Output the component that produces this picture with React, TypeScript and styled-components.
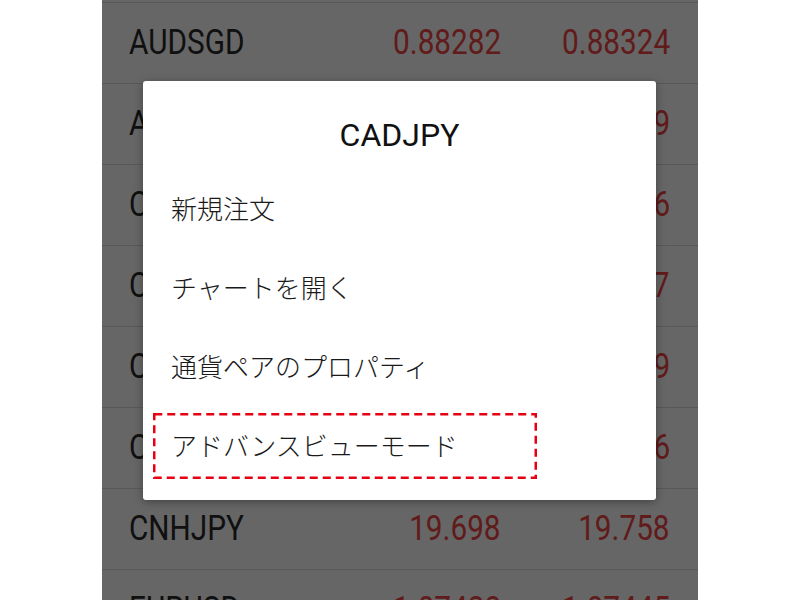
import React from "react";
import styled, { createGlobalStyle } from "styled-components";

const GlobalStyle = createGlobalStyle`
  html, body {
    margin: 0;
    padding: 0;
    background: #ffffff;
  }
  #root {
    height: 600px;
    overflow: hidden;
  }
`;

const quotes = [
  { symbol: "AUDNZD", bid: "1.06534", ask: "1.06580" },
  { symbol: "AUDSGD", bid: "0.88282", ask: "0.88324" },
  { symbol: "AUDUSD", bid: "0.75256", ask: "0.75279" },
  { symbol: "CADCHF", bid: "0.73842", ask: "0.73886" },
  { symbol: "CADJPY", bid: "82.965", ask: "82.997" },
  { symbol: "CHFJPY", bid: "112.47", ask: "112.519" },
  { symbol: "CHFSGD", bid: "1.37211", ask: "1.37266" },
  { symbol: "CNHJPY", bid: "19.698", ask: "19.758" },
  { symbol: "EURUSD", bid: "1.07428", ask: "1.07445" },
];

const menu = ["新規注文", "チャートを開く", "通貨ペアのプロパティ", "アドバンスビューモード"];

const Page = styled.div`
  display: flex;
  justify-content: center;
  height: 600px;
`;

const Screen = styled.div`
  position: relative;
  width: 596px;
  height: 600px;
  overflow: hidden;
  background: #ffffff;
`;

const QuoteList = styled.div`
  margin-top: -78px;
`;

const QuoteRow = styled.div`
  display: grid;
  grid-template-columns: 1fr auto 169px;
  align-items: center;
  height: 80px;
  padding: 0 28px 0 27px;
  border-bottom: 1px solid #dcdcdc;
  font-family: Roboto, "Liberation Sans", sans-serif;
  font-size: 35px;
  line-height: 40px;
`;

const Cell = styled.div<{ $right?: boolean; $price?: boolean }>`
  text-align: ${(p) => (p.$right ? "right" : "left")};
  color: ${(p) => (p.$price ? "#f04545" : "#2a2a2a")};
  white-space: nowrap;
`;

const Narrow = styled.span<{ $right?: boolean }>`
  display: inline-block;
  transform: scaleX(0.85);
  transform-origin: ${(p) => (p.$right ? "right" : "left")} center;
`;

const Scrim = styled.div`
  position: absolute;
  inset: 0;
  background: rgba(0, 0, 0, 0.6);
`;

const Dialog = styled.div`
  position: absolute;
  left: 41px;
  top: 81px;
  width: 513px;
  padding: 34px 0 16px;
  background: #ffffff;
  border-radius: 3px;
  box-shadow: 0 2px 8px rgba(0, 0, 0, 0.35);
`;

const Title = styled.div`
  height: 40px;
  margin-bottom: 13px;
  text-align: center;
  font-family: Roboto, "Liberation Sans", sans-serif;
  font-size: 32px;
  font-weight: 400;
  line-height: 40px;
  color: #111111;
`;

const MenuItem = styled.div`
  position: relative;
  display: flex;
  align-items: center;
  height: 79px;
  padding-left: 28px;
  font-family: "Noto Sans CJK JP", "Noto Sans", sans-serif;
  font-size: 26px;
  font-weight: 300;
  color: #1a1a1a;
`;

const Highlight = styled.svg`
  position: absolute;
  left: 10px;
  top: 8px;
  width: 384px;
  height: 66px;
`;

export default function App() {
  return (
    <Page>
      <GlobalStyle />
      <Screen>
        <QuoteList>
          {quotes.map((q) => (
            <QuoteRow key={q.symbol}>
              <Cell>
                <Narrow>{q.symbol}</Narrow>
              </Cell>
              <Cell $right $price>
                <Narrow $right>{q.bid}</Narrow>
              </Cell>
              <Cell $right $price>
                <Narrow $right>{q.ask}</Narrow>
              </Cell>
            </QuoteRow>
          ))}
        </QuoteList>
        <Scrim />
        <Dialog>
          <Title>CADJPY</Title>
          {menu.map((label, i) => (
            <MenuItem key={label}>
              {label}
              {i === menu.length - 1 && (
                <Highlight viewBox="0 0 384 66">
                  <rect
                    x="1.25"
                    y="1.25"
                    width="381.5"
                    height="63.5"
                    fill="none"
                    stroke="#e60012"
                    strokeWidth="2.5"
                    strokeDasharray="8 5"
                  />
                </Highlight>
              )}
            </MenuItem>
          ))}
        </Dialog>
      </Screen>
    </Page>
  );
}
